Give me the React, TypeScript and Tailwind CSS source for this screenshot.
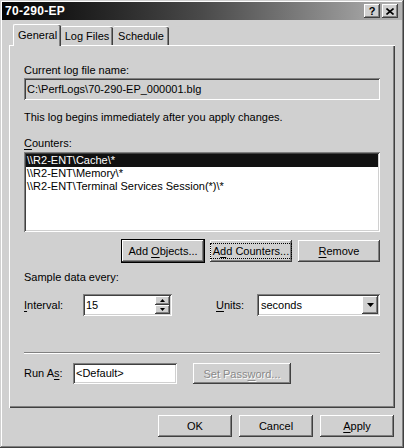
import React from "react";

const raised =
  "shadow-[inset_-1px_-1px_#404040,inset_1px_1px_#ffffff,inset_-2px_-2px_#808080]";
const sunken =
  "shadow-[inset_1px_1px_#808080,inset_-1px_-1px_#ffffff,inset_2px_2px_#404040,inset_-2px_-2px_#d0d0d0]";

const U = ({ children }: { children: React.ReactNode }) => (
  <span className="underline underline-offset-[2px]">{children}</span>
);

const Button = ({
  children,
  className = "",
  isDefault = false,
  focused = false,
  disabled = false,
}: {
  children: React.ReactNode;
  className?: string;
  isDefault?: boolean;
  focused?: boolean;
  disabled?: boolean;
}) => (
  <div
    className={`flex items-center justify-center bg-[#d0d0d0] ${raised} ${
      isDefault ? "outline outline-1 outline-black" : ""
    } ${className}`}
  >
    <span
      className={`px-[2px] leading-[14px] ${
        focused ? "outline outline-1 outline-dotted outline-black" : ""
      } ${disabled ? "text-[#8a8a8a] [text-shadow:1px_1px_#ffffff]" : ""}`}
    >
      {children}
    </span>
  </div>
);

const counters = [
  "\\\\R2-ENT\\Cache\\*",
  "\\\\R2-ENT\\Memory\\*",
  "\\\\R2-ENT\\Terminal Services Session(*)\\*",
];

export default function App() {
  return (
    <div className="w-[404px] h-[448px] bg-[#d0d0d0] p-[2px] flex flex-col font-['Liberation_Sans',Arial,sans-serif] text-[11px] text-black shadow-[inset_-1px_-1px_#404040,inset_1px_1px_#d0d0d0,inset_-2px_-2px_#808080,inset_2px_2px_#ffffff]">
      {/* title bar */}
      <div className="h-[18px] flex items-center justify-between pl-[3px] pr-[4px] bg-gradient-to-r from-[#050505] via-[#4a4a4a] to-[#b4b4b4]">
        <span className="text-white font-bold text-[12px] tracking-[0.3px]">70-290-EP</span>
        <div className="flex gap-[2px]">
          <div className={`w-[16px] h-[14px] bg-[#d0d0d0] ${raised} flex items-center justify-center font-bold text-[11px] leading-none`}>
            ?
          </div>
          <div className={`w-[16px] h-[14px] bg-[#d0d0d0] ${raised} flex items-center justify-center`}>
            <svg width="8" height="7" viewBox="0 0 8 7">
              <path d="M0.5 0.5 L7.5 6.5 M7.5 0.5 L0.5 6.5" stroke="#000" strokeWidth="1.6" />
            </svg>
          </div>
        </div>
      </div>

      {/* tabs + panel */}
      <div className="px-[7px] mt-[4px] flex flex-col">
        <div className="h-[21px] flex items-end pl-[4px] relative z-10">
          <div className="h-[22px] w-[48px] -mb-[1px] bg-[#d0d0d0] rounded-t-[2px] border-t border-l border-white shadow-[inset_-1px_0_#404040,inset_-2px_0_#808080] flex items-center pl-[4px] pb-[1px]">
            General
          </div>
          <div className="h-[19px] w-[52px] bg-[#d0d0d0] rounded-t-[2px] border-t border-white shadow-[inset_-1px_0_#404040,inset_-2px_0_#808080] flex items-center justify-center">
            Log Files
          </div>
          <div className="h-[19px] w-[56px] bg-[#d0d0d0] rounded-t-[2px] border-t border-white shadow-[inset_-1px_0_#404040,inset_-2px_0_#808080] flex items-center justify-center">
            Schedule
          </div>
        </div>
        <div className="h-[363px] border-t border-l border-white shadow-[inset_-1px_-1px_#404040,inset_-2px_-2px_#808080] px-[14px] pr-[15px] flex flex-col">
          <div className="mt-[18px] h-[13px] leading-[13px]">Current log file name:</div>
          <div className={`mt-[1px] h-[22px] ${sunken} flex items-center pl-[3px]`}>
            C:\PerfLogs\70-290-EP_000001.blg
          </div>
          <div className="mt-[11px] h-[13px] leading-[13px]">
            This log begins immediately after you apply changes.
          </div>
          <div className="mt-[13px] h-[13px] leading-[13px]">
            <U>C</U>ounters:
          </div>
          <div className={`mt-[2px] h-[80px] bg-white ${sunken} p-[2px] flex flex-col`}>
            {counters.map((c, i) => (
              <div
                key={c}
                className={`h-[13px] leading-[13px] pl-[1px] ${
                  i === 0 ? "bg-[#111111] text-white" : ""
                }`}
              >
                {c}
              </div>
            ))}
          </div>
          <div className="mt-[8px] flex justify-end gap-[6px]">
            <Button className="w-[82px] h-[22px]" isDefault>
              Add <U>O</U>bjects...
            </Button>
            <Button className="w-[82px] h-[22px]" focused>
              A<U>d</U>d Counters...
            </Button>
            <Button className="w-[82px] h-[22px]">
              <U>R</U>emove
            </Button>
          </div>
          <div className="mt-[9px] h-[13px] leading-[13px]">Sample data every:</div>
          <div className="mt-[10px] h-[22px] flex items-center">
            <div className="w-[59px]">
              <U>I</U>nterval:
            </div>
            <div className={`w-[89px] h-[22px] bg-white ${sunken} flex items-center justify-between pl-[3px] pr-[2px]`}>
              <span>15</span>
              <div className="flex flex-col">
                <div className={`w-[15px] h-[9px] bg-[#d0d0d0] ${raised} flex items-center justify-center`}>
                  <svg width="5" height="3" viewBox="0 0 5 3">
                    <path d="M2.5 0 L5 3 L0 3 Z" fill="#000" />
                  </svg>
                </div>
                <div className={`w-[15px] h-[9px] bg-[#d0d0d0] ${raised} flex items-center justify-center`}>
                  <svg width="5" height="3" viewBox="0 0 5 3">
                    <path d="M0 0 L5 0 L2.5 3 Z" fill="#000" />
                  </svg>
                </div>
              </div>
            </div>
            <div className="ml-[44px] w-[41px]">
              <U>U</U>nits:
            </div>
            <div className={`flex-1 h-[22px] bg-white ${sunken} flex items-center justify-between pl-[4px] pr-[2px]`}>
              <span>seconds</span>
              <div className={`w-[16px] h-[18px] bg-[#d0d0d0] ${raised} flex items-center justify-center`}>
                <svg width="7" height="4" viewBox="0 0 7 4">
                  <path d="M0 0 L7 0 L3.5 4 Z" fill="#000" />
                </svg>
              </div>
            </div>
          </div>
          <div className="mt-[36px] h-[2px] border-t border-[#808080] border-b border-b-white" />
          <div className="mt-[9px] h-[21px] flex items-center">
            <div className="w-[49px]">
              Run A<U>s</U>:
            </div>
            <div className={`w-[104px] h-[21px] bg-white ${sunken} flex items-center pl-[3px]`}>
              &lt;Default&gt;
            </div>
            <Button className="ml-[16px] w-[98px] h-[21px]" disabled>
              Set Pass<U>w</U>ord...
            </Button>
          </div>
        </div>
      </div>

      {/* bottom buttons */}
      <div className="mt-[7px] flex justify-end gap-[7px] pr-[8px]">
        <Button className="w-[74px] h-[22px]">OK</Button>
        <Button className="w-[74px] h-[22px]">Cancel</Button>
        <Button className="w-[74px] h-[22px]">
          <U>A</U>pply
        </Button>
      </div>
    </div>
  );
}
